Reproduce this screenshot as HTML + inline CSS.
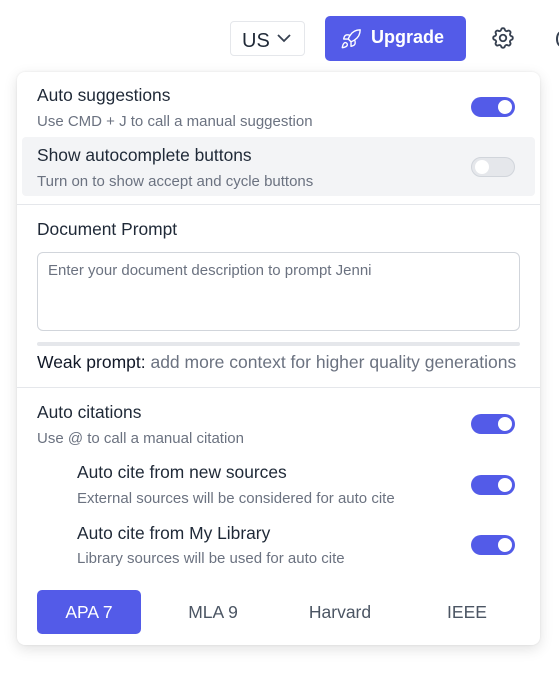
<!DOCTYPE html>
<html><head><style>
body{margin:0;width:559px;height:676px;background:#fff;font-family:"Liberation Sans",sans-serif;position:relative;overflow:hidden}
.a{position:absolute}
.t{font-size:17.4px;color:#1f2937}
.s{font-size:15px;color:#6b7280}
.tg{position:absolute;width:44px;height:20px;border-radius:10px;background:#535be8}
.tg::after{content:"";position:absolute;top:3px;right:3px;width:14px;height:14px;border-radius:50%;background:#fff}
.tg.off{background:#e5e7eb;border:1px solid #d1d5db;box-sizing:border-box}
.tg.off::after{left:3px;right:auto;top:2px}
.b{position:absolute;top:590px;height:44px;line-height:44px;font-size:17.5px;color:#4b5563;text-align:center;width:104px}
</style></head><body>
<div class="a" style="left:230px;top:21px;width:75px;height:35px;border:1px solid #e5e7eb;border-radius:4px;box-sizing:border-box"></div>
<div class="a" style="left:242px;top:30px;font-size:20px;color:#1f2937">US</div>
<svg class="a" style="left:276px;top:32px" width="16" height="12" viewBox="0 0 16 12"><path d="M2 3l6 6 6-6" fill="none" stroke="#374151" stroke-width="1.8"/></svg>
<div class="a" style="left:325px;top:16px;width:141px;height:45px;background:#535be8;border-radius:5px"></div>
<svg class="a" style="left:340px;top:28px" width="22" height="22" viewBox="0 0 24 24" fill="none" stroke="#fff" stroke-width="1.5" stroke-linecap="round" stroke-linejoin="round"><path d="M4.5 16.5c-1.5 1.3-2 5-2 5s3.7-.5 5-2c.7-.8.7-2.1-.1-2.9a2.2 2.2 0 0 0-2.9-.1z"/><path d="M12 15l-3-3a22 22 0 0 1 2-3.9A12.9 12.9 0 0 1 22 2c0 2.7-.8 7.5-6 11a22.4 22.4 0 0 1-4 2z"/><path d="M9 12H4s.6-3 2-4c1.6-1.1 5 0 5 0M12 15v5s3-.6 4-2c1.1-1.6 0-5 0-5"/></svg>
<div class="a" style="left:371px;top:27px;font-size:18px;font-weight:bold;color:#fff">Upgrade</div>
<svg class="a" style="left:490px;top:25px" width="26" height="26" viewBox="0 0 24 24" fill="none" stroke="#374151" stroke-width="1.7"><path d="M10.3 4.3c.4-1.8 3-1.8 3.4 0a1.7 1.7 0 0 0 2.6 1.1c1.5-.9 3.3.8 2.4 2.4a1.7 1.7 0 0 0 1 2.5c1.8.4 1.8 3 0 3.4a1.7 1.7 0 0 0-1 2.6c.9 1.5-.9 3.3-2.4 2.4a1.7 1.7 0 0 0-2.6 1c-.4 1.8-3 1.8-3.4 0a1.7 1.7 0 0 0-2.5-1c-1.6.9-3.3-.9-2.4-2.4a1.7 1.7 0 0 0-1.1-2.6c-1.8-.4-1.8-3 0-3.4a1.7 1.7 0 0 0 1.1-2.5c-.9-1.6.8-3.3 2.4-2.4 1 .6 2.3.1 2.5-1.1z"/><circle cx="12" cy="12" r="3"/></svg>
<div class="a" style="left:556px;top:31px;width:6px;height:12px;border:2px solid #374151;border-radius:50%"></div>

<div class="a" style="left:17px;top:72px;width:523px;height:573px;background:#fff;border-radius:8px;box-shadow:0 4px 14px rgba(0,0,0,.12),0 0 2px rgba(0,0,0,.08)"></div>
<div class="t a" style="left:37px;top:85px">Auto suggestions</div>
<div class="s a" style="left:37px;top:113px">Use CMD + J to call a manual suggestion</div>
<div class="tg" style="left:471px;top:97px"></div>
<div class="a" style="left:22px;top:137px;width:513px;height:59px;background:#f3f4f6;border-radius:4px"></div>
<div class="t a" style="left:37px;top:145px">Show autocomplete buttons</div>
<div class="s a" style="left:37px;top:173px">Turn on to show accept and cycle buttons</div>
<div class="tg off" style="left:471px;top:157px"></div>
<div class="a" style="left:17px;top:204px;width:523px;height:1px;background:#e5e7eb"></div>
<div class="t a" style="left:37px;top:219px">Document Prompt</div>
<div class="a" style="left:37px;top:252px;width:483px;height:79px;border:1px solid #d1d5db;border-radius:6px;box-sizing:border-box"></div>
<div class="s a" style="left:48px;top:262px">Enter your document description to prompt Jenni</div>
<div class="a" style="left:37px;top:342px;width:483px;height:4px;background:#e5e7eb;border-radius:2px"></div>
<div class="a" style="left:37px;top:352px;font-size:17.5px;color:#111827">Weak prompt: <span style="color:#6b7280">add more context for higher quality generations</span></div>
<div class="a" style="left:17px;top:387px;width:523px;height:1px;background:#e5e7eb"></div>
<div class="t a" style="left:37px;top:402px">Auto citations</div>
<div class="s a" style="left:37px;top:430px">Use @ to call a manual citation</div>
<div class="tg" style="left:471px;top:414px"></div>
<div class="t a" style="left:77px;top:462px">Auto cite from new sources</div>
<div class="s a" style="left:77px;top:490px">External sources will be considered for auto cite</div>
<div class="tg" style="left:471px;top:475px"></div>
<div class="t a" style="left:77px;top:523px">Auto cite from My Library</div>
<div class="s a" style="left:77px;top:550px">Library sources will be used for auto cite</div>
<div class="tg" style="left:471px;top:535px"></div>
<div class="b" style="left:37px;background:#535be8;color:#fff;border-radius:5px">APA 7</div>
<div class="b" style="left:161px">MLA 9</div>
<div class="b" style="left:288px">Harvard</div>
<div class="b" style="left:415px">IEEE</div>
</body></html>
